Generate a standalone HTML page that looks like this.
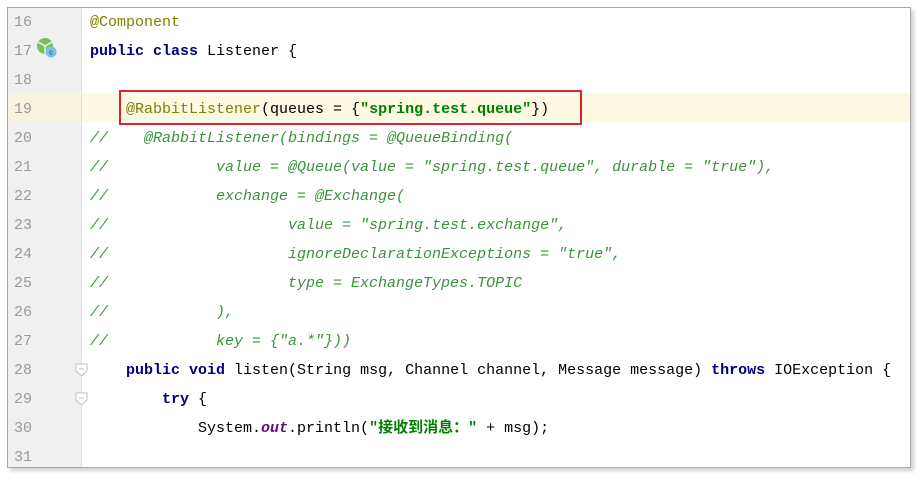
<!DOCTYPE html>
<html><head><meta charset="utf-8"><style>
body{margin:0;width:922px;height:480px;background:#fff;position:relative;overflow:hidden}
.frame{position:absolute;left:7px;top:7px;width:902px;height:459px;border:1px solid #a8a8a8;background:#fff;box-shadow:3px 3px 4px #d0d0d0}
.gut{position:absolute;left:0;top:0;width:73px;height:459px;background:#f0f0f0;border-right:1px solid #e0e0e0}
.hl{position:absolute;left:0;top:85px;width:902px;height:29px;background:#fdf9e3}
.hlg{position:absolute;left:0;top:85px;width:73px;height:29px;background:#f7f3de}
.row{position:absolute;left:0;height:29px;line-height:29px;font-family:"Liberation Mono","Noto Sans CJK SC",monospace;font-size:15px;white-space:pre;color:#000}
.ln{position:absolute;left:6px;width:30px;height:29px;line-height:29px;font-family:"Liberation Mono",monospace;font-size:15px;color:#999}
.an{color:#808000}.kw{color:#000080;font-weight:bold}.st{color:#008000;font-weight:bold}
.cm{color:#3a943a;font-style:italic}.out{color:#660e7a;font-style:italic;font-weight:bold}
.box{position:absolute;left:111px;top:82px;width:459px;height:31px;border:2px solid #e0222a}
</style></head><body>
<div class="frame">
<div class="hl"></div><div class="gut"></div><div class="hlg"></div>
<div class="ln" style="top:0">16</div>
<div class="ln" style="top:29px">17</div>
<div class="ln" style="top:58px">18</div>
<div class="ln" style="top:87px">19</div>
<div class="ln" style="top:116px">20</div>
<div class="ln" style="top:145px">21</div>
<div class="ln" style="top:174px">22</div>
<div class="ln" style="top:203px">23</div>
<div class="ln" style="top:232px">24</div>
<div class="ln" style="top:261px">25</div>
<div class="ln" style="top:290px">26</div>
<div class="ln" style="top:319px">27</div>
<div class="ln" style="top:348px">28</div>
<div class="ln" style="top:377px">29</div>
<div class="ln" style="top:406px">30</div>
<div class="ln" style="top:435px">31</div>
<svg style="position:absolute;left:28px;top:29px" width="24" height="24"><circle cx="9" cy="9" r="8" fill="#7cbe5e"/><path d="M2 5 L9 9 L16 5 M9 9 L9 17" stroke="#f0f0f0" stroke-width="1.5" fill="none"/><circle cx="15" cy="15" r="5.5" fill="#75c4e6"/><text x="15" y="17.5" font-size="7" text-anchor="middle" fill="#235" font-family="Liberation Sans">c</text></svg>
<svg style="position:absolute;left:67px;top:355px" width="14" height="16"><path d="M1 1 H12 V8 L6.5 13 L1 8 Z" fill="#fff" stroke="#c0c0c0"/><path d="M4 6 H9" stroke="#c0c0c0"/></svg>
<svg style="position:absolute;left:67px;top:384px" width="14" height="16"><path d="M1 1 H12 V8 L6.5 13 L1 8 Z" fill="#fff" stroke="#c0c0c0"/><path d="M4 6 H9" stroke="#c0c0c0"/></svg>
<div style="position:absolute;left:82px;top:0;width:820px">
<div class="row" style="top:0"><span class="an">@Component</span></div>
<div class="row" style="top:29px"><span class="kw">public class</span> Listener {</div>
<div class="row" style="top:87px">    <span class="an">@RabbitListener</span>(queues = {<span class="st">"spring.test.queue"</span>})</div>
<div class="row cm" style="top:116px">//    @RabbitListener(bindings = @QueueBinding(</div>
<div class="row cm" style="top:145px">//            value = @Queue(value = "spring.test.queue", durable = "true"),</div>
<div class="row cm" style="top:174px">//            exchange = @Exchange(</div>
<div class="row cm" style="top:203px">//                    value = "spring.test.exchange",</div>
<div class="row cm" style="top:232px">//                    ignoreDeclarationExceptions = "true",</div>
<div class="row cm" style="top:261px">//                    type = ExchangeTypes.TOPIC</div>
<div class="row cm" style="top:290px">//            ),</div>
<div class="row cm" style="top:319px">//            key = {"a.*"}))</div>
<div class="row" style="top:348px">    <span class="kw">public void</span> listen(String msg, Channel channel, Message message) <span class="kw">throws</span> IOException {</div>
<div class="row" style="top:377px">        <span class="kw">try</span> {</div>
<div class="row" style="top:406px">            System.<span class="out">out</span>.println(<span class="st">"接收到消息："</span> + msg);</div>
</div>
<div class="box"></div>
</div>
</body></html>
